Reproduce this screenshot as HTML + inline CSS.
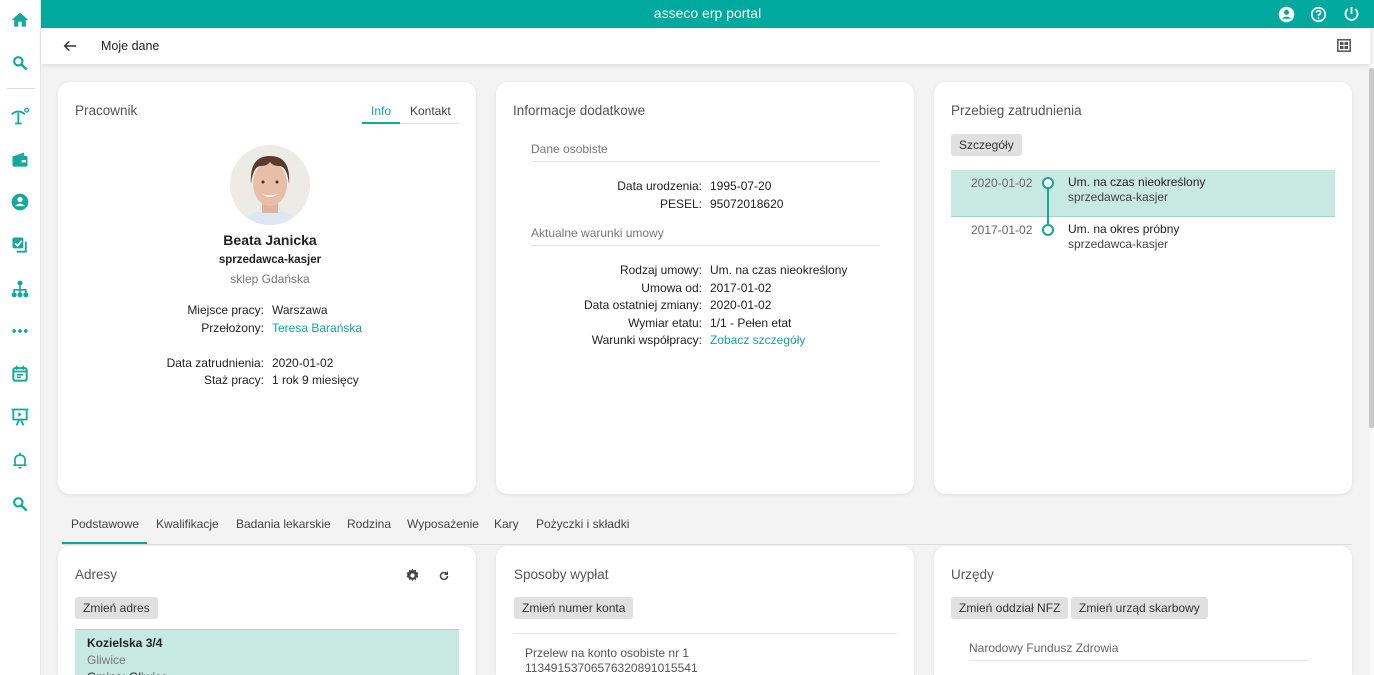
<!DOCTYPE html>
<html style="width:1374px;height:675px;overflow:hidden"><head><meta charset="utf-8"><style>
*{box-sizing:border-box;margin:0;padding:0}
body{width:1374px;height:675px;overflow:hidden;background:#f3f3f3;font-family:"Liberation Sans",sans-serif;font-size:12px;color:#222;position:relative}
.a{position:absolute}
#side{left:0;top:0;width:41px;height:675px;background:#fff;border-right:1px solid #e6e6e6}
#top{left:41px;top:0;width:1333px;height:28px;background:#00a99d;color:#fff;text-align:center;font-size:14px;line-height:26px}
#sub{left:41px;top:28px;width:1329px;height:36px;background:#fff;box-shadow:0 2px 4px rgba(0,0,0,.08)}
.card{background:#fff;border-radius:12px;box-shadow:0 1px 4px rgba(0,0,0,.08)}
.t{font-size:13.5px;color:#555}
.r{text-align:right;color:#222}
.btn{background:#e0e0e0;border-radius:3px;color:#333;padding:0 8px;height:22px;line-height:22px;font-size:12px}
.g{color:#777}
.lk{color:#13a596}
.sec{color:#777;border-bottom:1px solid #e6e6e6}
.ic{left:10px;width:20px;height:20px}
.tab{top:517px;color:#444}
</style></head><body>
<div id="side" class="a">
<svg class="a ic" style="top:10px" viewBox="0 0 24 24"><path d="M10 20v-6h4v6h5v-8h3L12 3 2 12h3v8z" fill="#14a99a"/></svg>
<svg class="a ic" style="top:53px" viewBox="0 0 24 24"><circle cx="10" cy="10" r="5" stroke="#14a99a" stroke-width="2.6" fill="none"/><path d="M14 14l6 6" stroke="#14a99a" stroke-width="3"/></svg>
<div class="a" style="left:7px;top:88px;width:28px;height:1px;background:#ddd"></div>
<svg class="a ic" style="top:106px" viewBox="0 0 24 24"><path d="M2 10q8-7 16 0M10 8v13M6 21h8" stroke="#14a99a" stroke-width="2.2" fill="none"/><circle cx="20" cy="5" r="2.2" stroke="#14a99a" stroke-width="1.6" fill="none"/></svg>
<svg class="a ic" style="top:150px" viewBox="0 0 24 24"><rect x="3" y="7" width="18" height="13" rx="2" fill="#14a99a"/><path d="M5 7l12-4v4" fill="#14a99a"/><rect x="14" y="12" width="5" height="3" fill="#fff"/></svg>
<svg class="a ic" style="top:192px" viewBox="0 0 24 24"><circle cx="12" cy="12" r="10" fill="#14a99a"/><circle cx="12" cy="9" r="3.2" fill="#fff"/><path d="M6 17q6-6 12 0" fill="#fff"/></svg>
<svg class="a ic" style="top:235px" viewBox="0 0 24 24"><rect x="3" y="3" width="13" height="13" rx="2" fill="#14a99a"/><path d="M6 10l3 3 5-6" stroke="#fff" stroke-width="2" fill="none"/><path d="M19 8v12H8" stroke="#14a99a" stroke-width="2.2" fill="none"/></svg>
<svg class="a ic" style="top:279px" viewBox="0 0 24 24"><circle cx="12" cy="5" r="3" fill="#14a99a"/><path d="M12 8v5M5 18v-5h14v5M12 13v5" stroke="#14a99a" stroke-width="2" fill="none"/><circle cx="5" cy="19" r="3" fill="#14a99a"/><circle cx="12" cy="19" r="3" fill="#14a99a"/><circle cx="19" cy="19" r="3" fill="#14a99a"/></svg>
<svg class="a ic" style="top:321px" viewBox="0 0 24 24"><circle cx="5" cy="12" r="2.2" fill="#14a99a"/><circle cx="12" cy="12" r="2.2" fill="#14a99a"/><circle cx="19" cy="12" r="2.2" fill="#14a99a"/></svg>
<svg class="a ic" style="top:364px" viewBox="0 0 24 24"><rect x="4" y="5" width="16" height="15" rx="2" stroke="#14a99a" stroke-width="2.4" fill="none"/><path d="M8 2v5M16 2v5M4 9h16M8 13h8M8 16h5" stroke="#14a99a" stroke-width="2"/></svg>
<svg class="a ic" style="top:407px" viewBox="0 0 24 24"><path d="M2 3h20M4 3v12h16V3M8 22l3-7M16 22l-3-7" stroke="#14a99a" stroke-width="2.2" fill="none"/><path d="M10 6v6l4-3z" fill="#14a99a"/></svg>
<svg class="a ic" style="top:451px" viewBox="0 0 24 24"><path d="M6 17V11q0-6 6-6t6 6v6zM4 17h16M12 2v3M10 20h4" stroke="#14a99a" stroke-width="2" fill="none"/></svg>
<svg class="a ic" style="top:494px" viewBox="0 0 24 24"><circle cx="10" cy="10" r="5" stroke="#14a99a" stroke-width="2.6" fill="none"/><path d="M14 14l6 6" stroke="#14a99a" stroke-width="3"/></svg>
</div>
<div id="top" class="a">asseco erp portal</div>
<svg class="a" style="left:1278px;top:6px" width="17" height="17" viewBox="0 0 24 24"><circle cx="12" cy="12" r="11" fill="#fff"/><circle cx="12" cy="9" r="3.5" fill="#00a99d"/><path d="M5.5 18q6.5-6 13 0" fill="#00a99d"/></svg>
<svg class="a" style="left:1310px;top:6px" width="17" height="17" viewBox="0 0 24 24"><circle cx="12" cy="12" r="9.5" stroke="#fff" stroke-width="2.4" fill="none"/><path d="M9 9.5q0-3 3-3t3 3q0 2-3 3v2" stroke="#fff" stroke-width="2.2" fill="none"/><circle cx="12" cy="17.5" r="1.3" fill="#fff"/></svg>
<svg class="a" style="left:1343px;top:5px" width="17" height="18" viewBox="0 0 24 24"><path d="M12 2v10M7 5a8.5 8.5 0 1 0 10 0" stroke="#fff" stroke-width="2.6" fill="none"/></svg>
<div id="sub" class="a">
<svg class="a" style="left:21px;top:10px" width="16" height="16" viewBox="0 0 24 24"><path d="M21 12H4M11 5l-7 7 7 7" stroke="#333" stroke-width="2.2" fill="none"/></svg>
<div class="a" style="left:60px;top:11px;font-size:12.5px;color:#222">Moje dane</div>
<svg class="a" style="left:1296px;top:11px" width="14" height="13" viewBox="0 0 14 13"><rect x="0.8" y="0.8" width="12.4" height="11.4" fill="none" stroke="#555" stroke-width="1.5"/><rect x="3" y="3" width="3.5" height="3" fill="#555"/><rect x="7.5" y="3" width="3.5" height="3" fill="#555"/><rect x="3" y="7" width="3.5" height="3" fill="#555"/><rect x="7.5" y="7" width="3.5" height="3" fill="#555"/></svg>
</div>
<div class="a" style="left:1370px;top:64px;width:4px;height:611px;background:#fafafa"></div>
<div class="a" style="left:1369px;top:68px;width:5px;height:360px;background:#c8c8c8;border-radius:2px"></div>

<div class="a card" style="left:58px;top:82px;width:418px;height:412px">
<div class="a t" style="left:17px;top:21px">Pracownik</div>
<div class="a lk" style="left:313px;top:22px;font-size:12px">Info</div>
<div class="a" style="left:352px;top:22px;color:#444">Kontakt</div>
<div class="a" style="left:304px;top:41px;width:97px;height:1px;background:#e0e0e0"></div>
<div class="a" style="left:304px;top:40px;width:38px;height:2px;background:#13a596"></div>
<svg class="a" style="left:171px;top:62px" width="82" height="82" viewBox="0 0 82 82"><defs><clipPath id="c"><circle cx="41" cy="41" r="40"/></clipPath></defs><g clip-path="url(#c)"><rect width="82" height="82" fill="#ecebe6"/><path d="M10 82q4-14 31-16q27 2 31 16z" fill="#dfe7f2"/><rect x="33" y="55" width="16" height="14" fill="#e0b49c"/><ellipse cx="41" cy="40" rx="17" ry="22" fill="#e8bfa6"/><path d="M22 40q-2-28 19-28q21 0 19 28q-2-18-10-18q-6 0-9-4q-3 4-9 4q-8 0-10 18z" fill="#5a3b2e"/><path d="M33 50q8 6 16 0q-8 3-16 0z" fill="#fff"/><circle cx="34" cy="38" r="1.5" fill="#333"/><circle cx="48" cy="38" r="1.5" fill="#333"/></g></svg>
<div class="a" style="left:0;width:424px;top:150px;text-align:center;font-size:14px;font-weight:bold">Beata Janicka</div>
<div class="a" style="left:0;width:424px;top:172px;text-align:center;font-weight:bold;font-size:11.5px">sprzedawca-kasjer</div>
<div class="a g" style="left:0;width:424px;top:190px;text-align:center">sklep Gdańska</div>
<div class="a r" style="left:0;width:206px;top:220px;line-height:17.5px">Miejsce pracy:<br>Przełożony:<br><br>Data zatrudnienia:<br>Staż pracy:</div>
<div class="a" style="left:214px;top:220px;line-height:17.5px">Warszawa<br><span class="lk">Teresa Barańska</span><br><br>2020-01-02<br>1 rok 9 miesięcy</div>
</div>

<div class="a card" style="left:496px;top:82px;width:418px;height:412px">
<div class="a t" style="left:17px;top:21px">Informacje dodatkowe</div>
<div class="a sec" style="left:35px;top:60px;width:349px;height:20px">Dane osobiste</div>
<div class="a r" style="left:0;width:206px;top:95px;line-height:18px">Data urodzenia:<br>PESEL:</div>
<div class="a" style="left:214px;top:95px;line-height:18px">1995-07-20<br>95072018620</div>
<div class="a sec" style="left:35px;top:144px;width:349px;height:20px">Aktualne warunki umowy</div>
<div class="a r" style="left:0;width:206px;top:180px;line-height:17.5px">Rodzaj umowy:<br>Umowa od:<br>Data ostatniej zmiany:<br>Wymiar etatu:<br>Warunki współpracy:</div>
<div class="a" style="left:214px;top:180px;line-height:17.5px">Um. na czas nieokreślony<br>2017-01-02<br>2020-01-02<br>1/1 - Pełen etat<br><span class="lk">Zobacz szczegóły</span></div>
</div>

<div class="a card" style="left:934px;top:82px;width:418px;height:412px">
<div class="a t" style="left:17px;top:21px">Przebieg zatrudnienia</div>
<div class="a btn" style="left:17px;top:52px">Szczegóły</div>
<div class="a" style="left:17px;top:88px;width:384px;height:47px;background:#c8e8e2;border-bottom:1px solid #9fd6cc"></div>
<div class="a g" style="left:37px;top:94px;color:#666">2020-01-02</div>
<div class="a g" style="left:37px;top:141px;color:#666">2017-01-02</div>
<div class="a" style="left:113px;top:100px;width:2px;height:48px;background:#13a596"></div>
<div class="a" style="left:108px;top:95px;width:12px;height:12px;border:2px solid #13a596;border-radius:50%;background:#fff"></div>
<div class="a" style="left:108px;top:142px;width:12px;height:12px;border:2px solid #13a596;border-radius:50%;background:#fff"></div>
<div class="a" style="left:134px;top:93px;line-height:15px">Um. na czas nieokreślony<br><span style="color:#444">sprzedawca-kasjer</span></div>
<div class="a" style="left:134px;top:140px;line-height:15px">Um. na okres próbny<br><span style="color:#444">sprzedawca-kasjer</span></div>
</div>

<div class="a" style="left:62px;top:544px;width:1290px;height:1px;background:#ddd"></div>
<div class="a" style="left:62px;top:542px;width:85px;height:2px;background:#13a596"></div>
<div class="a tab lk" style="left:71px">Podstawowe</div>
<div class="a tab" style="left:156px">Kwalifikacje</div>
<div class="a tab" style="left:236px">Badania lekarskie</div>
<div class="a tab" style="left:347px">Rodzina</div>
<div class="a tab" style="left:407px">Wyposażenie</div>
<div class="a tab" style="left:494px">Kary</div>
<div class="a tab" style="left:536px">Pożyczki i składki</div>

<div class="a card" style="left:58px;top:546px;width:418px;height:129px;border-radius:12px 12px 0 0">
<div class="a t" style="left:17px;top:21px">Adresy</div>
<svg class="a" style="left:347px;top:22px" width="15" height="15" viewBox="0 0 24 24"><path d="M12 1l2 3 3.5-1 .5 3.5 3.5 1-1.5 3.5 1.5 3.5-3.5 1-.5 3.5-3.5-1-2 3-2-3-3.5 1-.5-3.5-3.5-1 1.5-3.5L2.5 7.5 6 6.5 6.5 3l3.5 1z" fill="#444"/><circle cx="12" cy="12" r="3.5" fill="#fff"/></svg>
<svg class="a" style="left:380px;top:24px" width="12" height="12" viewBox="0 0 24 24"><path d="M19 12a7 7 0 1 1-2-5" stroke="#444" stroke-width="3" fill="none"/><path d="M20 2v8h-8z" fill="#444"/></svg>
<div class="a btn" style="left:17px;top:51px">Zmień adres</div>
<div class="a" style="left:17px;top:83px;width:384px;height:46px;background:#c8e8e2;border-top:1px solid #9fd6cc;overflow:hidden">
<div class="a" style="left:12px;top:5px;line-height:17px"><b>Kozielska 3/4</b><br><span class="g">Gliwice</span><br>Gmina: Gliwice</div></div>
</div>
<div class="a card" style="left:496px;top:546px;width:418px;height:129px;border-radius:12px 12px 0 0">
<div class="a t" style="left:18px;top:21px">Sposoby wypłat</div>
<div class="a btn" style="left:18px;top:51px">Zmień numer konta</div>
<div class="a" style="left:17px;top:87px;width:384px;height:1px;background:#e6e6e6"></div>
<div class="a" style="left:29px;top:100px;line-height:15px;color:#555">Przelew na konto osobiste nr 1<br>11349153706576320891015541</div>
</div>
<div class="a card" style="left:934px;top:546px;width:418px;height:129px;border-radius:12px 12px 0 0">
<div class="a t" style="left:17px;top:21px">Urzędy</div>
<div class="a btn" style="left:17px;top:51px">Zmień oddział NFZ</div>
<div class="a btn" style="left:137px;top:51px">Zmień urząd skarbowy</div>
<div class="a sec" style="left:35px;top:95px;width:339px;height:20px;color:#666">Narodowy Fundusz Zdrowia</div>
</div>
</body></html>
